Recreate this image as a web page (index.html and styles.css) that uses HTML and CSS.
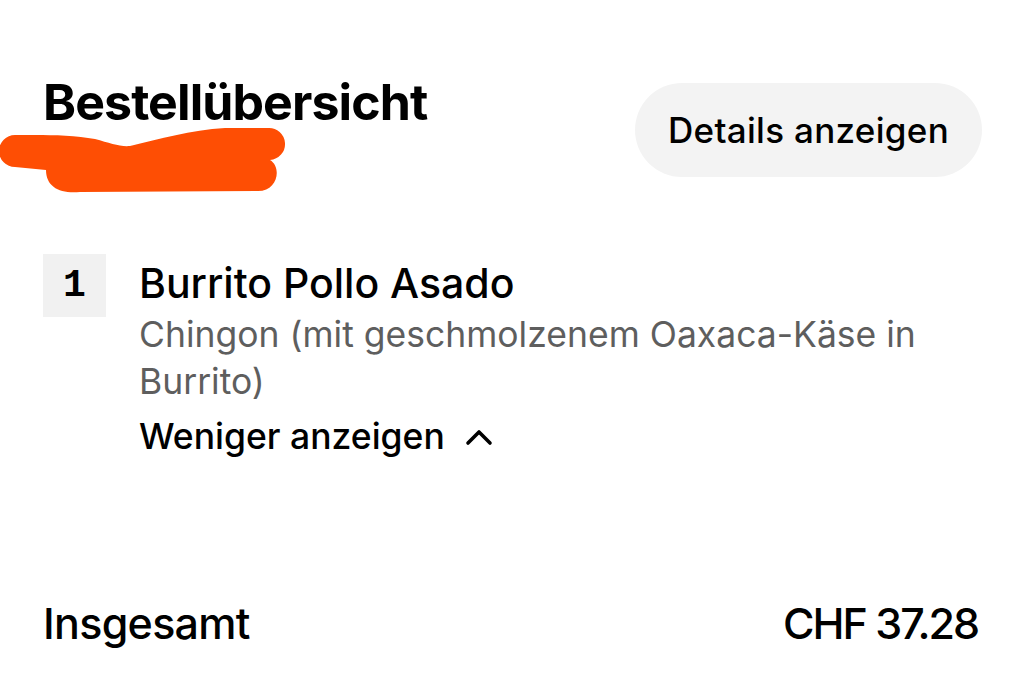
FILE: index.html
```html
<!DOCTYPE html>
<html lang="de">
<head>
  <meta charset="UTF-8">
  <meta name="viewport" content="width=device-width, initial-scale=1.0">
  <title>Bestellübersicht</title>
  <link rel="stylesheet" href="styles.css">
</head>
<body>
  <div class="page">
    <div class="summary-head">
      <div class="title-block">
        <h1 class="title">Bestellübersicht</h1>
        <svg class="scribble" width="290" height="72" viewBox="0 0 290 72">
          <path d="M15 10 C35 10, 70 9, 95 14 C110 18, 120 22, 130 21 C160 14, 190 5, 225 3 L268 3 A16 16 0 0 1 270 35 C282 42, 278 66, 258 66 L80 67 C60 69, 46 62, 46 45 L15 42 A16 16 0 0 1 15 10 Z" fill="#fe4e04"/>
        </svg>
      </div>
      <button class="details-btn">Details anzeigen</button>
    </div>

    <div class="item">
      <div class="qty">1</div>
      <div class="item-body">
        <div class="item-name">Burrito Pollo Asado</div>
        <div class="item-desc">Chingon (mit geschmolzenem Oaxaca-Käse in Burrito)</div>
        <div class="toggle">
          Weniger anzeigen
          <svg class="chevron" width="28" height="18" viewBox="0 0 28 18">
            <path d="M3 15 L14 4 L25 15" fill="none" stroke="#000" stroke-width="3.6" stroke-linecap="round" stroke-linejoin="round"/>
          </svg>
        </div>
      </div>
    </div>

    <div class="total">
      <span class="total-label">Insgesamt</span>
      <span class="total-price">CHF 37.28</span>
    </div>
  </div>
</body>
</html>
```

FILE: styles.css
```css
html, body {
  margin: 0;
  padding: 0;
  background: #fff;
}

body {
  font-family: Inter, "Noto Sans", sans-serif;
  color: #000;
}

.page {
  width: 1024px;
  height: 676px;
  padding: 77px 42px 0 43px;
  box-sizing: border-box;
  overflow: hidden;
}

.summary-head {
  display: flex;
  justify-content: space-between;
  align-items: flex-start;
}

.title-block {
  margin-left: -43px;
}

.title {
  margin: 0 0 0 43px;
  font-size: 50px;
  line-height: 50px;
  font-weight: 700;
  letter-spacing: -0.9px;
}

.scribble {
  display: block;
  margin-top: -2px;
}

.details-btn {
  margin-top: 6px;
  height: 94px;
  padding: 0 33px;
  border: none;
  border-radius: 47px;
  background: #f3f3f3;
  font-family: Inter, "Noto Sans", sans-serif;
  font-size: 35px;
  font-weight: 500;
  letter-spacing: 0.3px;
  color: #000;
}

.item {
  display: flex;
  gap: 33px;
  margin-top: 57px;
}

.qty {
  width: 63px;
  height: 63px;
  flex: none;
  background: #f1f1f1;
  display: flex;
  align-items: center;
  justify-content: center;
  font-family: "Liberation Mono", monospace;
  font-size: 38px;
  font-weight: 700;
}

.item-body {
  max-width: 820px;
}

.item-name {
  font-size: 41px;
  line-height: 48px;
  font-weight: 500;
  margin-top: 5px;
}

.item-desc {
  font-size: 35.5px;
  line-height: 47px;
  color: #5e5e5e;
  margin-top: 4px;
}

.toggle {
  display: flex;
  align-items: center;
  gap: 20px;
  margin-top: 5px;
  font-size: 35.5px;
  line-height: 54px;
  font-weight: 500;
}

.total {
  display: flex;
  justify-content: space-between;
  margin-top: 133px;
  font-size: 43px;
  font-weight: 500;
  padding-right: 4px;
}

.total-label {
  letter-spacing: -0.7px;
}

.total-price {
  letter-spacing: -2px;
}
```
